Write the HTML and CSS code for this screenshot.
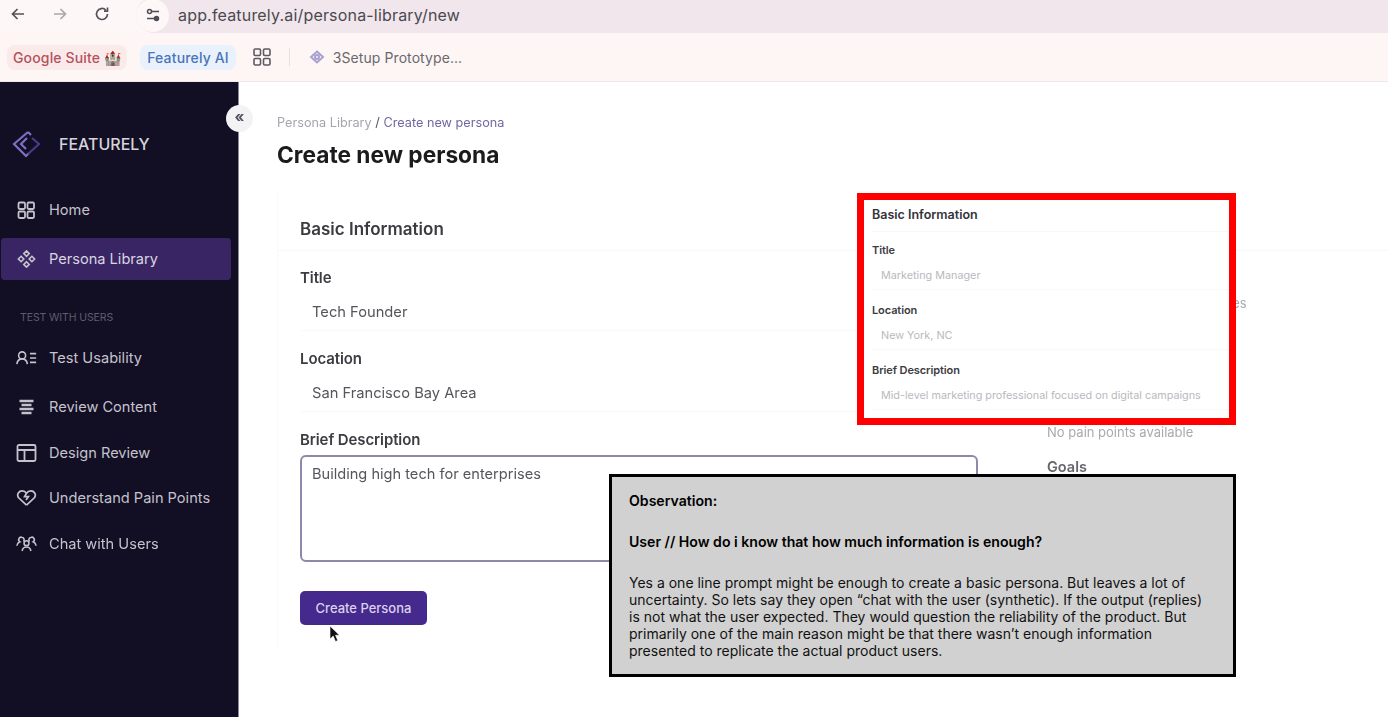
FILE: index.html
```html
<!DOCTYPE html>
<html lang="en">
<head>
<meta charset="utf-8">
<title>Create new persona - Featurely</title>
<link rel="stylesheet" href="styles.css">
</head>
<body>
<div class="capture">
  <header class="toolbar">
    <svg class="tb-icon" viewBox="0 0 16 16"><path d="M14 8H2.500M7.500 3l-5 5 5 5"/></svg>
    <svg class="tb-icon tb-dim" viewBox="0 0 16 16"><path d="M2 8h11.500M8.500 3l5 5-5 5"/></svg>
    <svg class="tb-icon" viewBox="0 0 16 16"><path d="M13.500 8a5.500 5.500 0 1 1-1.700-4M13.500 1.500v3.600H10"/></svg>
    <div class="urlbar">
      <span class="tune">
        <svg viewBox="0 0 16 16"><circle cx="4.500" cy="4.500" r="2"/><path d="M7 4.500h7M2 11.500h7"/><circle cx="11.500" cy="11.500" r="2" class="solid"/></svg>
      </span>
      <span class="url">app.featurely.ai/persona-library/new</span>
    </div>
  </header>
  <nav class="bookmarks">
    <span class="chip chip-red">Google Suite 🏰</span>
    <span class="chip chip-blue">Featurely AI</span>
    <svg class="bm-grid" viewBox="0 0 18 18"><rect x="1" y="1" width="6.500" height="6.500" rx="1.200"/><rect x="10.500" y="1" width="6.500" height="6.500" rx="1.200"/><rect x="1" y="10.500" width="6.500" height="6.500" rx="1.200"/><rect x="10.500" y="10.500" width="6.500" height="6.500" rx="1.200"/></svg>
    <span class="bm-sep"></span>
    <svg class="bm-logo" viewBox="0 0 16 16"><path d="M8 2.500 14 8l-6 5.500L2 8z"/><circle cx="8" cy="8" r="2"/></svg>
    <span class="bm-text">3Setup Prototype...</span>
  </nav>
  <div class="app">
    <aside class="sidebar">
      <div class="brand">
        <svg class="brand-logo" viewBox="0 0 34 30">
          <path class="logo-light" d="M16 3 2 15l12 12 3-3M16 3l3 3M15 9l-6 6 5 5"/>
          <path class="logo-dark" d="M20 9l7 6-11 10"/>
        </svg>
        <span>FEATURELY</span>
      </div>
      <a class="nav-item">
        <svg viewBox="0 0 21 18"><rect x="2.500" y="1.500" width="6.500" height="6.500" rx="1.200"/><rect x="11.500" y="1.500" width="6.500" height="6.500" rx="1.200"/><rect x="2.500" y="10.500" width="6.500" height="6.500" rx="1.200"/><rect x="11.500" y="10.500" width="6.500" height="6.500" rx="1.200"/></svg>
        Home</a>
      <a class="nav-item active">
        <svg viewBox="0 0 21 20"><path d="m10.500 1 3 3-3 3-3-3zM16.500 7l3 3-3 3-3-3zM4.500 7l3 3-3 3-3-3zM10.500 13l3 3-3 3-3-3z"/></svg>
        Persona Library</a>
      <div class="nav-section">TEST WITH USERS</div>
      <div class="nav-group">
        <a class="nav-item spaced">
          <svg viewBox="0 0 24 18"><circle cx="7" cy="6" r="4"/><path d="M1 16c.5-4 3-6 6-6s5.500 2 6 6M16 4h7M16 9h7M16 14h7"/></svg>
          Test Usability</a>
        <a class="nav-item">
          <svg viewBox="0 0 20 18"><path class="thick" d="M3 3h14M5 7h10M3 11h14M5 15h10"/></svg>
          Review Content</a>
        <a class="nav-item">
          <svg viewBox="0 0 20 18"><rect x="1" y="1" width="18" height="16" rx="1.500"/><path d="M1 6h18M8 6v11"/></svg>
          Design Review</a>
        <a class="nav-item">
          <svg viewBox="0 0 22 18"><path d="M11 16.500 2.500 8.500C.5 5 3 1.500 6.500 1.500c2 0 3.500 1 4.500 2.500l-2 3.500h4L10.500 11M11 4c1-1.500 2.500-2.500 4.500-2.500 3.500 0 6 3.500 4 7L11 16.500"/></svg>
          Understand Pain Points</a>
        <a class="nav-item">
          <svg viewBox="0 0 24 18"><circle cx="12" cy="8" r="2.800"/><path d="M7 17c.5-3 2.500-4.500 5-4.500s4.500 1.500 5 4.500M7 1.500a2.600 2.600 0 0 1 1.500 4.500M17 1.500a2.600 2.600 0 0 0-1.500 4.500M7 1.500A2.800 2.800 0 0 0 4.500 6.500C2.500 7.300 1.300 8.800 1 11M17 1.500a2.800 2.800 0 0 1 2.500 5c2 .8 3.200 2.300 3.500 4.500"/></svg>
          Chat with Users</a>
      </div>
    </aside>
    <button class="collapse" type="button">«</button>
    <main class="main">
      <p class="crumbs"><span class="crumb-muted">Persona Library</span> <span class="crumb-sep">/</span> <span class="crumb-current">Create new persona</span></p>
      <h1>Create new persona</h1>
      <section class="card">
        <h2 class="card-title">Basic Information</h2>
        <div class="card-body">
          <form class="form">
            <div class="field-label">Title</div>
            <div class="input">Tech Founder</div>
            <div class="field-label">Location</div>
            <div class="input">San Francisco Bay Area</div>
            <div class="field-label">Brief Description</div>
            <div class="textarea">Building high tech for enterprises</div>
            <div class="btn-wrap">
              <span class="btn">Create Persona</span>
              <svg class="cursor" viewBox="0 0 12 18"><path d="M1 1v13l3.200-3 2.300 5.500 2.300-1-2.300-5.300H10.500z"/></svg>
            </div>
          </form>
          <div class="side">
            <p class="side-line">No values, habits or preferences</p>
            <p class="side-empty">No pain points available</p>
            <h3 class="side-heading">Goals</h3>
          </div>
        </div>
      </section>
    </main>
  </div>
</div>

<aside class="callout-red">
  <h4 class="mini-title">Basic Information</h4>
  <div class="mini-label">Title</div>
  <div class="mini-input">Marketing Manager</div>
  <div class="mini-label">Location</div>
  <div class="mini-input">New York, NC</div>
  <div class="mini-label">Brief Description</div>
  <div class="mini-input">Mid-level marketing professional focused on digital campaigns</div>
</aside>

<aside class="observation">
  <p class="obs-strong">Observation:</p>
  <p class="obs-strong">User // How do i know that how much information is enough?</p>
  <p class="obs-body">Yes a one line prompt might be enough to create a basic persona. But leaves a lot of uncertainty. So lets say they open “chat with the user (synthetic). If the output (replies) is not what the user expected. They would question the reliability of the product. But primarily one of the main reason might be that there wasn’t enough information presented to replicate the actual product users.</p>
</aside>
</body>
</html>
```

FILE: styles.css
```css
* { box-sizing: border-box; }
html, body { margin: 0; height: 717px; overflow: hidden; background: #fff; }
body { font-family: Inter, "Liberation Sans", sans-serif; color: #222; position: relative; }
p, h1, h2, h3, h4 { margin: 0; }

.capture { height: 717px; display: flex; flex-direction: column; filter: blur(.6px); }

/* browser chrome */
.toolbar { height: 33px; flex: none; display: flex; align-items: flex-start; padding: 6px 0 0 10px; background: #fdf7f7; }
.tb-icon { width: 16px; height: 16px; margin-right: 26px; fill: none; stroke: #55525a; stroke-width: 1.700; }
.tb-dim { stroke: #aaa7ac; }
.urlbar { flex: 1; height: 36px; margin-top: -9px; display: flex; align-items: center; background: #f1e6eb; border-radius: 18px 0 0 18px; }
.tune { width: 33px; height: 33px; border-radius: 50%; background: #fdf7f7; display: flex; align-items: center; justify-content: center; }
.tune svg { width: 16px; height: 16px; fill: none; stroke: #4f4c55; stroke-width: 1.500; }
.tune .solid { fill: #4f4c55; }
.url { font-size: 16px; color: #4b4950; margin-left: 9px; letter-spacing: .18px; }

.bookmarks { height: 49px; flex: none; display: flex; align-items: center; padding: 0 0 0 7px; background: #fdf6f5; border-bottom: 1px solid #eee8e8; font-size: 14px; }
.chip { height: 25px; display: flex; align-items: center; border-radius: 8px; padding: 0 6px; margin-right: 13px; white-space: nowrap; font-weight: 500; letter-spacing: .15px; }
.chip-red { background: #fbeaea; color: #b4515d; }
.chip-blue { background: #e9f1fc; color: #4a74b8; padding: 0 7px; margin-right: 17px; }
.bm-grid { width: 18px; height: 18px; fill: none; stroke: #5d5a62; stroke-width: 1.600; }
.bm-sep { width: 1px; height: 18px; background: #e6e0e0; margin: 0 19px 0 18px; }
.bm-logo { width: 16px; height: 16px; fill: none; stroke: #a8a0d0; stroke-width: 2; }
.bm-text { margin-left: 8px; color: #6b686e; letter-spacing: .08px; }

/* app */
.app { flex: 1; display: flex; position: relative; min-height: 0; }
.sidebar { width: 239px; flex: none; background: #120e24; border-right: 1px solid #8b8a99; color: #c4c3cb; font-size: 14.600px; padding-top: 43px; }
.brand { height: 38px; display: flex; align-items: center; padding-left: 12px; margin-bottom: 26px; color: #d5d4da; font-size: 16px; font-weight: 500; }
.brand-logo { width: 34px; height: 30px; margin-right: 13px; fill: none; stroke-width: 2.200; }
.logo-light { stroke: #7d70c4; }
.logo-dark { stroke: #4a3a8c; }
.nav-item { height: 42px; width: 230px; margin: 0 0 7px 1px; display: flex; align-items: center; padding-left: 15px; gap: 12px; border-radius: 4px; }
.nav-item svg { width: 21px; height: 18px; fill: none; stroke: #c4c3cc; stroke-width: 1.800; flex: none; }
.nav-item .thick { stroke-width: 2.600; }
.active { background: #3a2564; color: #d8d6e0; }
.nav-section { font-size: 10.500px; color: #5f5d6d; height: 15px; line-height: 15px; margin: 30px 0 12px 20px; letter-spacing: -.1px; }
.nav-group { display: flex; flex-direction: column; }
.nav-group .nav-item { height: 41.500px; margin-bottom: 4px; }
.nav-group .spaced { margin-bottom: 7.800px; }

.collapse { position: absolute; left: 226px; top: 23px; width: 27px; height: 27px; border: 0; border-radius: 50%; background: #f3f3f5; color: #55535f; font-size: 15px; font-weight: 700; line-height: 22px; padding: 0 0 3px; font-family: inherit; }

.main { flex: 1; min-width: 0; padding: 33px 0 0 38px; }
.crumbs { font-size: 12.700px; line-height: 16px; }
.crumb-muted { color: #a6a5ae; }
.crumb-sep { color: #55535f; }
.crumb-current { color: #6f68a0; }
h1 { font-size: 22.700px; font-weight: 700; color: #1b1b1d; line-height: 30px; margin-top: 9px; }
.card { margin-top: 20px; border-left: 1px solid #fafafb; }
.card-title { height: 62px; padding: 28px 0 0 22px; font-size: 17px; line-height: 24px; font-weight: 600; color: #3a3a40; margin-top: -1px; border-bottom: 1px solid #f8f8f9; }
.card-body { display: grid; grid-template-columns: 678px 1fr; column-gap: 69px; padding: 0 0 0 22px; }
.form { padding-top: 15px; }
.field-label { font-size: 15px; font-weight: 600; color: #3c3c42; line-height: 24px; letter-spacing: -.1px; }
.input { height: 38px; margin: 3px 0 16px; padding: 0 12px; display: flex; align-items: center; font-size: 14.700px; color: #55555c; border-bottom: 1px solid #f9f9fa; }
.textarea { height: 107px; margin-top: 3px; padding: 8px 10px; border: 2px solid #8e89ab; border-radius: 6px; font-size: 14.600px; color: #55555c; }
.btn-wrap { margin-top: 29px; position: relative; height: 58px; }
.btn { width: 127px; height: 34px; padding-bottom: 1px; display: flex; align-items: center; justify-content: center; background: #46298c; color: #d9d2ee; font-size: 13px; font-weight: 500; border-radius: 5px; }
.cursor { position: absolute; left: 29px; top: 34px; width: 12px; height: 18px; fill: #111; stroke: #fff; stroke-width: .6; }
.side { font-size: 13px; color: #a9a9af; }
.side-line { margin-top: 44px; line-height: 16px; white-space: nowrap; }
.side-empty { margin-top: 113px; line-height: 16px; font-size: 13px; }
.side-heading { margin-top: 17px; font-size: 14.500px; font-weight: 600; color: #66666c; line-height: 20px; }

/* annotations */
.callout-red { position: absolute; left: 857px; top: 193px; width: 379px; height: 232px; background: #fff; border: 7px solid #ff0000; padding: 7px 0 0 8px; }
.mini-title { font-size: 12.500px; font-weight: 600; color: #33333a; line-height: 15px; padding-bottom: 9px; border-bottom: 1px solid #f9f9fa; }
.mini-label { font-size: 11px; font-weight: 600; color: #3c3c42; line-height: 14px; margin-top: 11px; letter-spacing: -.1px; }
.mini-input { height: 28px; margin: 5px 0 13px; padding: 0 9px; display: flex; align-items: center; font-size: 10.800px; color: #b9b9be; border-bottom: 1px solid #f9f9fa; }
.mini-input + .mini-label { margin-top: 0; }

.observation { position: absolute; left: 609px; top: 474px; width: 627px; height: 203px; background: #d1d1d1; border: 3px solid #000; padding: 15px 17px 0; font-size: 14px; line-height: 17px; color: #111; }
.obs-strong { font-size: 14.100px; font-weight: 600; margin-bottom: 24px; color: #000; }
```
